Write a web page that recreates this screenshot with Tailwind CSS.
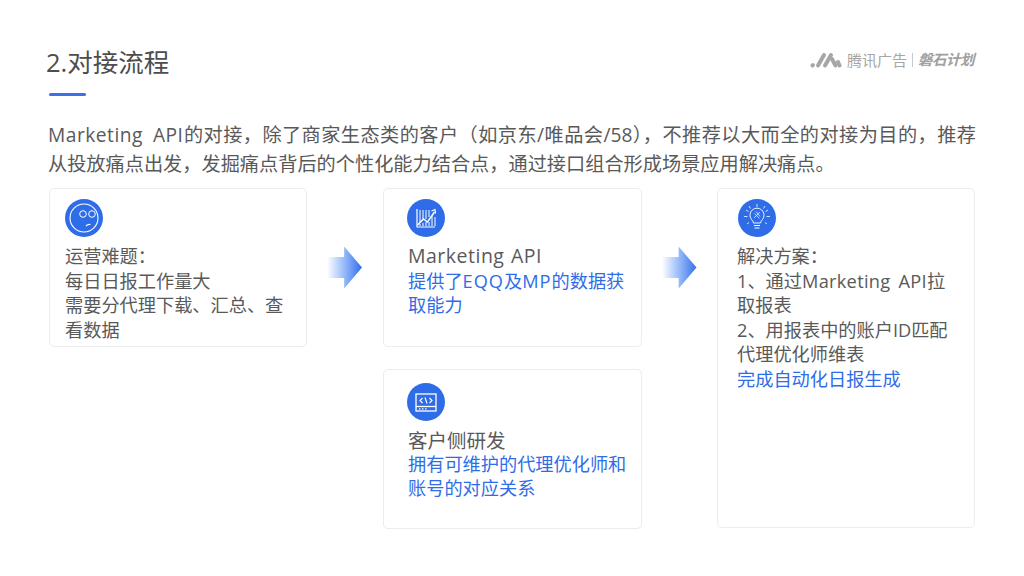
<!doctype html>
<html>
<head>
<meta charset="UTF-8">
<script src="https://cdn.jsdelivr.net/npm/@tailwindcss/browser@4"></script>
</head>
<body class="bg-white">
<div class="w-[1024px] h-[576px] overflow-hidden px-[49px] font-['Open_Sans','Noto_Sans_CJK_SC',sans-serif] text-[#595959]">

  <!-- header -->
  <div class="flex justify-between items-start pt-[43px] h-[120px] -ml-[3px]">
    <div>
      <h1 class="text-[25.500px] leading-[38px] text-[#4d4d4d]">2.对接流程</h1>
      <div class="w-[37px] h-[3px] mt-[12px] ml-[3px] rounded-full bg-[#3c6fe8]"></div>
    </div>
    <div class="flex items-center mt-[7px] mr-[1px] text-[#a6a6a6]">
      <svg class="w-[32px] h-[20px]" viewBox="0 0 32 20" fill="none" stroke="#a6a6a6" stroke-width="4" stroke-linecap="round">
        <path d="M2.500 15.500l.3-.4"/>
        <path d="M8 15.500L14 5"/>
        <path d="M15 15.500L21 5"/>
        <path d="M22 9l3.500 6.500"/>
        <path d="M28 12l1.500 3.500"/>
      </svg>
      <span class="ml-[5px] text-[15px] leading-[20px]">腾讯广告</span>
      <span class="w-px h-[14px] bg-[#c8c8c8] mx-[5px]"></span>
      <span class="text-[14.500px] leading-[20px] italic font-bold tracking-[-0.5px] text-[#a0a0a0]">磐石计划</span>
    </div>
  </div>

  <!-- intro -->
  <p class="w-[928px] -ml-[1px] text-[19.200px] leading-[29px] text-justify text-[#595959]"><span class="tracking-[0.5px] [word-spacing:4px]">Marketing API</span>的对接，除了商家生态类的客户（如京东/唯品会/58），不推荐以大而全的对接为目的，推荐从投放痛点出发，发掘痛点背后的个性化能力结合点，通过接口组合形成场景应用解决痛点。</p>

  <!-- flow -->
  <div class="flex items-start mt-[10px] w-[926px]">
    <div class="w-[258px] h-[159px] border border-[#ececec] rounded-[5px] pt-[10px] pl-[15px] pr-[16px] shrink-0">
      <div class="w-[38px] h-[38px] rounded-full bg-[#2f6de8]">
        <svg viewBox="0 0 38 38" fill="none" stroke="#fff" class="w-[38px] h-[38px]">
          <circle cx="19" cy="19" r="14" stroke-width="1.100"/>
          <circle cx="18" cy="15" r="3.300" stroke-width="1"/>
          <circle cx="27" cy="15" r="3.300" stroke-width="1"/>
          <path d="M21 27q2-2 4.500-1.500" stroke-width="1.200"/>
        </svg>
      </div>
      <div class="mt-[7px] text-[18.200px] leading-[24.500px]">
        <p>运营难题：</p>
        <p>每日日报工作量大</p>
        <p>需要分代理下载、汇总、查看数据</p>
      </div>
    </div>

    <div class="w-[76px] h-[159px] shrink-0 flex items-center justify-center">
      <div class="w-[35px] h-[42px] -ml-[1px] bg-gradient-to-r from-white to-[#2f6de8] [clip-path:polygon(0_25%,49%_25%,49%_0,100%_50%,49%_100%,49%_75%,0_75%)]"></div>
    </div>

    <div class="flex flex-col gap-[22px] shrink-0">
      <div class="w-[259px] h-[159px] border border-[#ececec] rounded-[5px] pt-[10px] pl-[24px] pr-[12px]">
        <div class="w-[38px] h-[38px] -ml-[1px] rounded-full bg-[#2f6de8]">
          <svg viewBox="0 0 38 38" fill="none" stroke="#fff" class="w-[38px] h-[38px]">
            <path d="M10 10v18h18" stroke-width="1.200"/>
            <path d="M13 24v-13M16 20v-9M19 20v-9M22 18v-7M25 27v-10M28 27v-9M13 27v-2M16 27v-3M19 27v-4M22 27v-4" stroke-width="1"/>
            <path d="M10.500 26l6-6 4 3 7-10" stroke-width="1.500"/>
            <path d="M24.500 12l3.500-1.500.5 4" stroke-width="1.200"/>
          </svg>
        </div>
        <div class="mt-[7px] text-[18.200px] leading-[24.500px]">
          <p class="text-[19.500px] tracking-[0.5px] [word-spacing:1px]">Marketing API</p>
          <p class="text-[#2f6de8]">提供了<span class="tracking-[1px]">EQQ</span>及<span class="tracking-[1px]">MP</span>的数据获取能力</p>
        </div>
      </div>

      <div class="w-[259px] h-[160px] border border-[#ececec] rounded-[5px] pt-[13px] pl-[24px] pr-[12px]">
        <div class="w-[38px] h-[38px] -ml-[1px] rounded-full bg-[#2f6de8]">
          <svg viewBox="0 0 38 38" fill="none" stroke="#fff" class="w-[38px] h-[38px]">
            <rect x="9" y="11" width="20" height="17" stroke-width="1.300"/>
            <path d="M9 23.500h20" stroke-width="1.300"/>
            <path d="M15.500 15l-2.500 2.500 2.500 2.500M22.500 15l2.500 2.500-2.500 2.500M18 14.500l2 6" stroke-width="1.100"/>
            <path d="M12 25.800h1.500M15 25.800h1.500M18 25.800h1.500" stroke-width="1.200"/>
          </svg>
        </div>
        <div class="mt-[8px] text-[18.200px] leading-[24px]">
          <p class="text-[19.500px] leading-[23px]">客户侧研发</p>
          <p class="text-[#2f6de8]">拥有可维护的代理优化师和账号的对应关系</p>
        </div>
      </div>
    </div>

    <div class="w-[75px] h-[159px] shrink-0 flex items-center justify-center">
      <div class="w-[35px] h-[42px] -ml-[1px] bg-gradient-to-r from-white to-[#2f6de8] [clip-path:polygon(0_25%,49%_25%,49%_0,100%_50%,49%_100%,49%_75%,0_75%)]"></div>
    </div>

    <div class="w-[258px] h-[340px] border border-[#ececec] rounded-[5px] pt-[10px] pl-[20px] pr-[14px] shrink-0">
      <div class="w-[38px] h-[38px] rounded-full bg-[#2f6de8]">
        <svg viewBox="0 0 38 38" fill="none" stroke="#fff" class="w-[38px] h-[38px]">
          <path d="M15.500 24q-.2-2-2-3.500a7 7 0 1 1 11 0q-1.800 1.500-2 3.500z" stroke-width="0.900"/>
          <path d="M16 26.500h6M16.500 29h5" stroke-width="1.100"/>
          <path d="M16 19l6-6M16.500 14.500l5 5M18 12.500l4 5" stroke-width="0.700"/>
          <path d="M19 5v3M11 7l1.500 2.500M27 7l-1.500 2.500M6 17.500h3.500M28.500 17.500H32M8 11l2.500 1.500M30 11l-2.500 1.500M9 25l2-1.500M29 25l-2-1.500" stroke-width="0.800"/>
        </svg>
      </div>
      <div class="mt-[7px] -ml-[1px] text-[18.200px] leading-[24.500px]">
        <p>解决方案：</p>
        <p>1、通过<span class="tracking-[0.3px] [word-spacing:3px]">Marketing API</span>拉取报表</p>
        <p>2、用报表中的账户ID匹配代理优化师维表</p>
        <p class="text-[#2f6de8]">完成自动化日报生成</p>
      </div>
    </div>
  </div>
</div>
</body>
</html>
